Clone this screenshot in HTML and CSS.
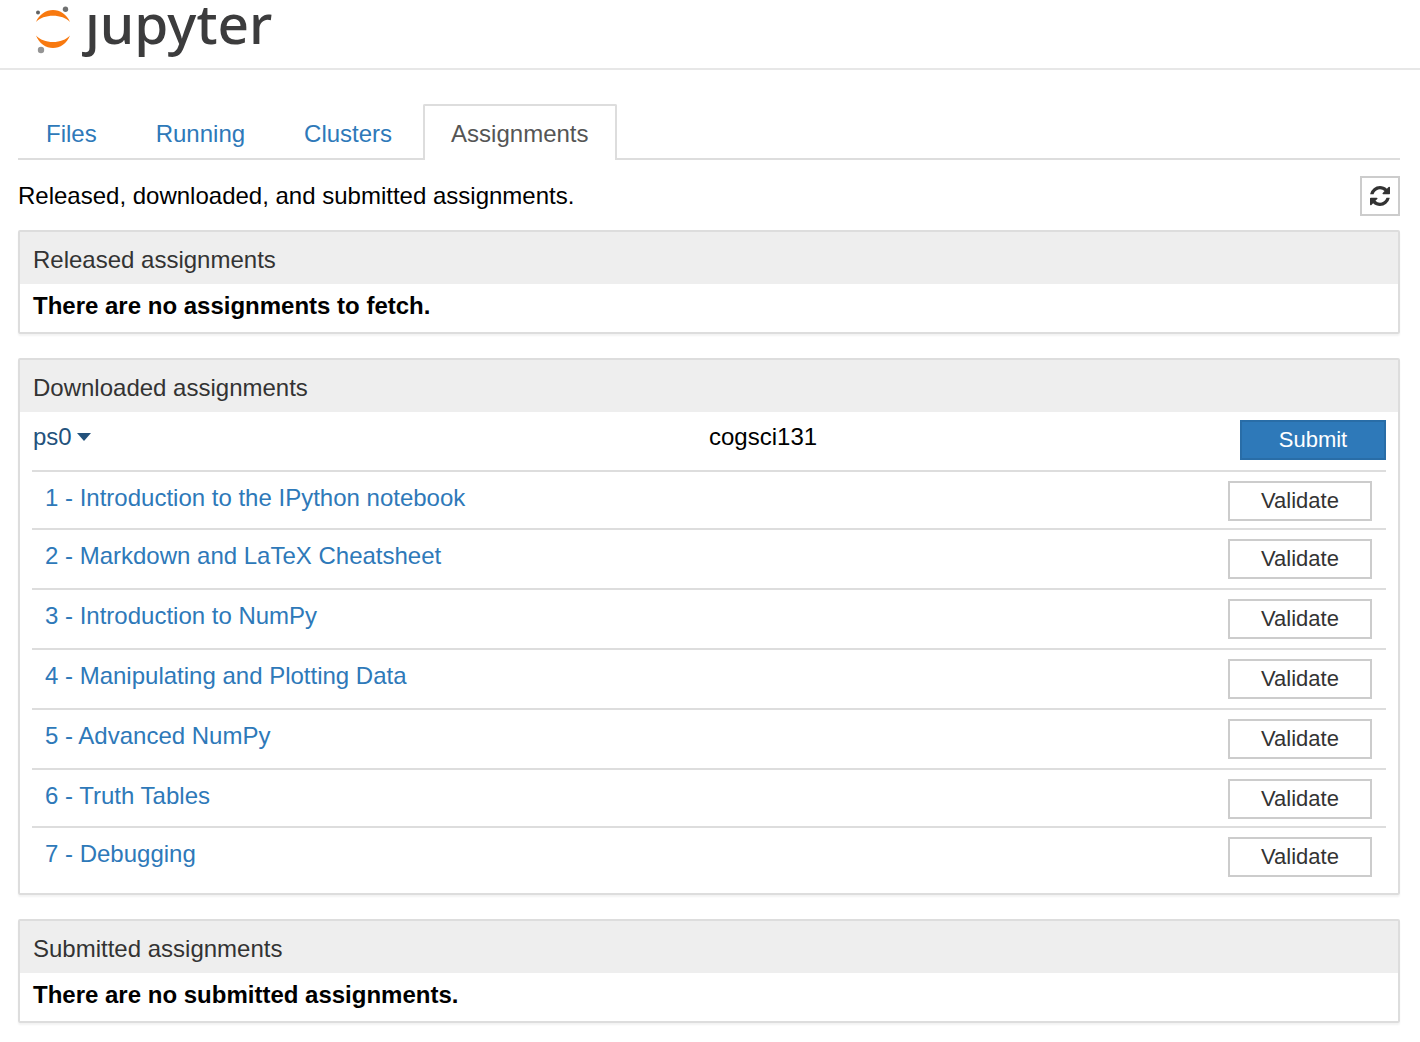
FILE: index.html
```html
<!DOCTYPE html>
<html lang="en">
<head>
<meta charset="utf-8">
<title>Assignments - Jupyter</title>
<meta name="viewport" content="width=device-width, initial-scale=1">
<link rel="stylesheet" href="styles.css">
</head>
<body>
<header class="header">
  <a class="logo" href="#" aria-label="jupyter">
    <svg class="logo-mark" viewBox="0 0 40 54" aria-hidden="true">
      <path fill="#f8790f" d="M3 22C6 14.500 13 10 20 10S34 14.500 37 22C33 17.800 27 15.700 20 15.700S7 17.800 3 22z"/>
      <path fill="#f8790f" d="M3 35.500C6 43.500 13 48 20 48S34 43.500 37 35.500C33 39.700 27 42 20 42S7 39.700 3 35.500z"/>
      <circle cx="5" cy="12.500" r="2" fill="#616262"/>
      <circle cx="32.500" cy="9.200" r="2.700" fill="#6f7070"/>
      <circle cx="8" cy="50" r="3.200" fill="#949494"/>
    </svg>
    <span class="logo-text">ȷupyter</span>
  </a>
</header>
<main class="main">
  <nav class="tabs">
    <a class="tab" href="#">Files</a>
    <a class="tab" href="#">Running</a>
    <a class="tab" href="#">Clusters</a>
    <a class="tab tab-active" href="#" aria-current="page">Assignments</a>
  </nav>
  <div class="toolbar">
    <p class="intro">Released, downloaded, and submitted assignments.</p>
    <button class="btn btn-icon" type="button" aria-label="Refresh">
      <svg class="refresh" viewBox="0 0 1536 1536" aria-hidden="true">
        <path fill="currentColor" d="M1511 928q0 5-1 7-64 268-268 434.500T764 1536q-146 0-282.500-55T238 1324l-129 129q-19 19-45 19t-45-19-19-45V960q0-26 19-45t45-19h448q26 0 45 19t19 45-19 45l-137 137q71 66 161 102t187 36q134 0 250-65t186-179q11-17 53-117 8-23 30-23h192q13 0 22.500 9.500t9.500 22.500zm25-800v448q0 26-19 45t-45 19h-448q-26 0-45-19t-19-45 19-45l138-138Q969 256 768 256q-134 0-250 65T332 500q-11 17-53 117-8 23-30 23H50q-13 0-22.500-9.500T18 608v-7q65-268 270-434.500T768 0q146 0 284 55.500T1297 212l130-129q19-19 45-19t45 19 19 45z"/>
      </svg>
    </button>
  </div>

  <section class="panel">
    <h2 class="panel-title">Released assignments</h2>
    <p class="empty">There are no assignments to fetch.</p>
  </section>

  <section class="panel">
    <h2 class="panel-title">Downloaded assignments</h2>
    <div class="panel-list">
      <div class="assignment">
        <a class="assignment-name" href="#">ps0<span class="caret"></span></a>
        <span class="course">cogsci131</span>
        <button class="btn btn-primary" type="button">Submit</button>
      </div>
      <ul class="notebooks">
        <li class="notebook"><a class="link" href="#">1 - Introduction to the IPython notebook</a><button class="btn" type="button">Validate</button></li>
        <li class="notebook"><a class="link" href="#">2 - Markdown and LaTeX Cheatsheet</a><button class="btn" type="button">Validate</button></li>
        <li class="notebook"><a class="link" href="#">3 - Introduction to NumPy</a><button class="btn" type="button">Validate</button></li>
        <li class="notebook"><a class="link" href="#">4 - Manipulating and Plotting Data</a><button class="btn" type="button">Validate</button></li>
        <li class="notebook"><a class="link" href="#">5 - Advanced NumPy</a><button class="btn" type="button">Validate</button></li>
        <li class="notebook"><a class="link" href="#">6 - Truth Tables</a><button class="btn" type="button">Validate</button></li>
        <li class="notebook"><a class="link" href="#">7 - Debugging</a><button class="btn" type="button">Validate</button></li>
      </ul>
    </div>
  </section>

  <section class="panel">
    <h2 class="panel-title">Submitted assignments</h2>
    <p class="empty">There are no submitted assignments.</p>
  </section>
</main>
</body>
</html>
```
FILE: styles.css
```css
* {
  box-sizing: border-box;
}

body {
  margin: 0;
  background: #fff;
  color: #000;
  font: 24px/34px "Liberation Sans", Arial, sans-serif;
}

a {
  color: #2e79b9;
  text-decoration: none;
}

.header {
  display: flex;
  height: 70px;
  padding-left: 33px;
  border-bottom: 2px solid #e7e7e7;
}

.logo {
  display: flex;
  gap: 12px;
}

.logo-mark {
  width: 40px;
  height: 54px;
}

.logo-text {
  color: #3c3c3d;
  font: 500 55px/46px "Noto Sans", "Open Sans", sans-serif;
}

.main {
  padding: 34px 20px 18px 18px;
}

.tabs {
  display: flex;
  gap: 3px;
  border-bottom: 2px solid #ddd;
}

.tab {
  margin-bottom: -2px;
  padding: 11px 26px 9px;
  border: 2px solid transparent;
  border-bottom: 0;
  border-radius: 2px 2px 0 0;
}

.tab-active {
  border-color: #ddd;
  background: #fff;
  color: #555;
}

.toolbar {
  display: flex;
  justify-content: space-between;
  align-items: center;
  padding: 16px 0 14px;
}

.intro {
  margin: 0;
}

.btn {
  width: 144px;
  height: 40px;
  padding: 0;
  border: 2px solid #ccc;
  background: #fff;
  color: #333;
  font: 22px/32px "Liberation Sans", Arial, sans-serif;
}

.btn-primary {
  width: 146px;
  border-color: #296da7;
  background: #2e79b9;
  color: #fff;
}

.btn-icon {
  display: flex;
  align-items: center;
  justify-content: center;
  width: 40px;
}

.refresh {
  width: 20px;
  height: 20px;
}

.panel {
  margin-bottom: 24px;
  border: 2px solid #ddd;
  border-radius: 2px;
  box-shadow: 0 2px 2px rgba(0, 0, 0, 0.05);
}

.panel-title {
  margin: 0;
  padding: 11px 13px 7px;
  background: #eee;
  color: #333;
  font-size: 24px;
  font-weight: 400;
}

.empty {
  margin: 0;
  padding: 5px 13px 9px;
  font-weight: 700;
}

.panel-list {
  padding: 0 12px;
}

.assignment {
  display: grid;
  grid-template-columns: 50% 1fr auto;
  align-items: start;
  padding: 8px 0 10px;
}

.assignment-name {
  display: flex;
  align-items: center;
  gap: 5px;
  padding-left: 1px;
  color: #23527c;
}

.caret {
  border: 7px solid transparent;
  border-top: 8px solid #23527c;
  border-bottom: 0;
}

.notebooks {
  margin: 0;
  padding: 0;
  list-style: none;
}

.notebook {
  display: flex;
  justify-content: space-between;
  align-items: flex-start;
  height: 60px;
  padding: 9px 14px 0 13px;
  border-top: 2px solid #ddd;
}

.notebook:first-child,
.notebook:nth-child(6) {
  height: 58px;
}

.notebook:last-child {
  height: 67px;
}
```
